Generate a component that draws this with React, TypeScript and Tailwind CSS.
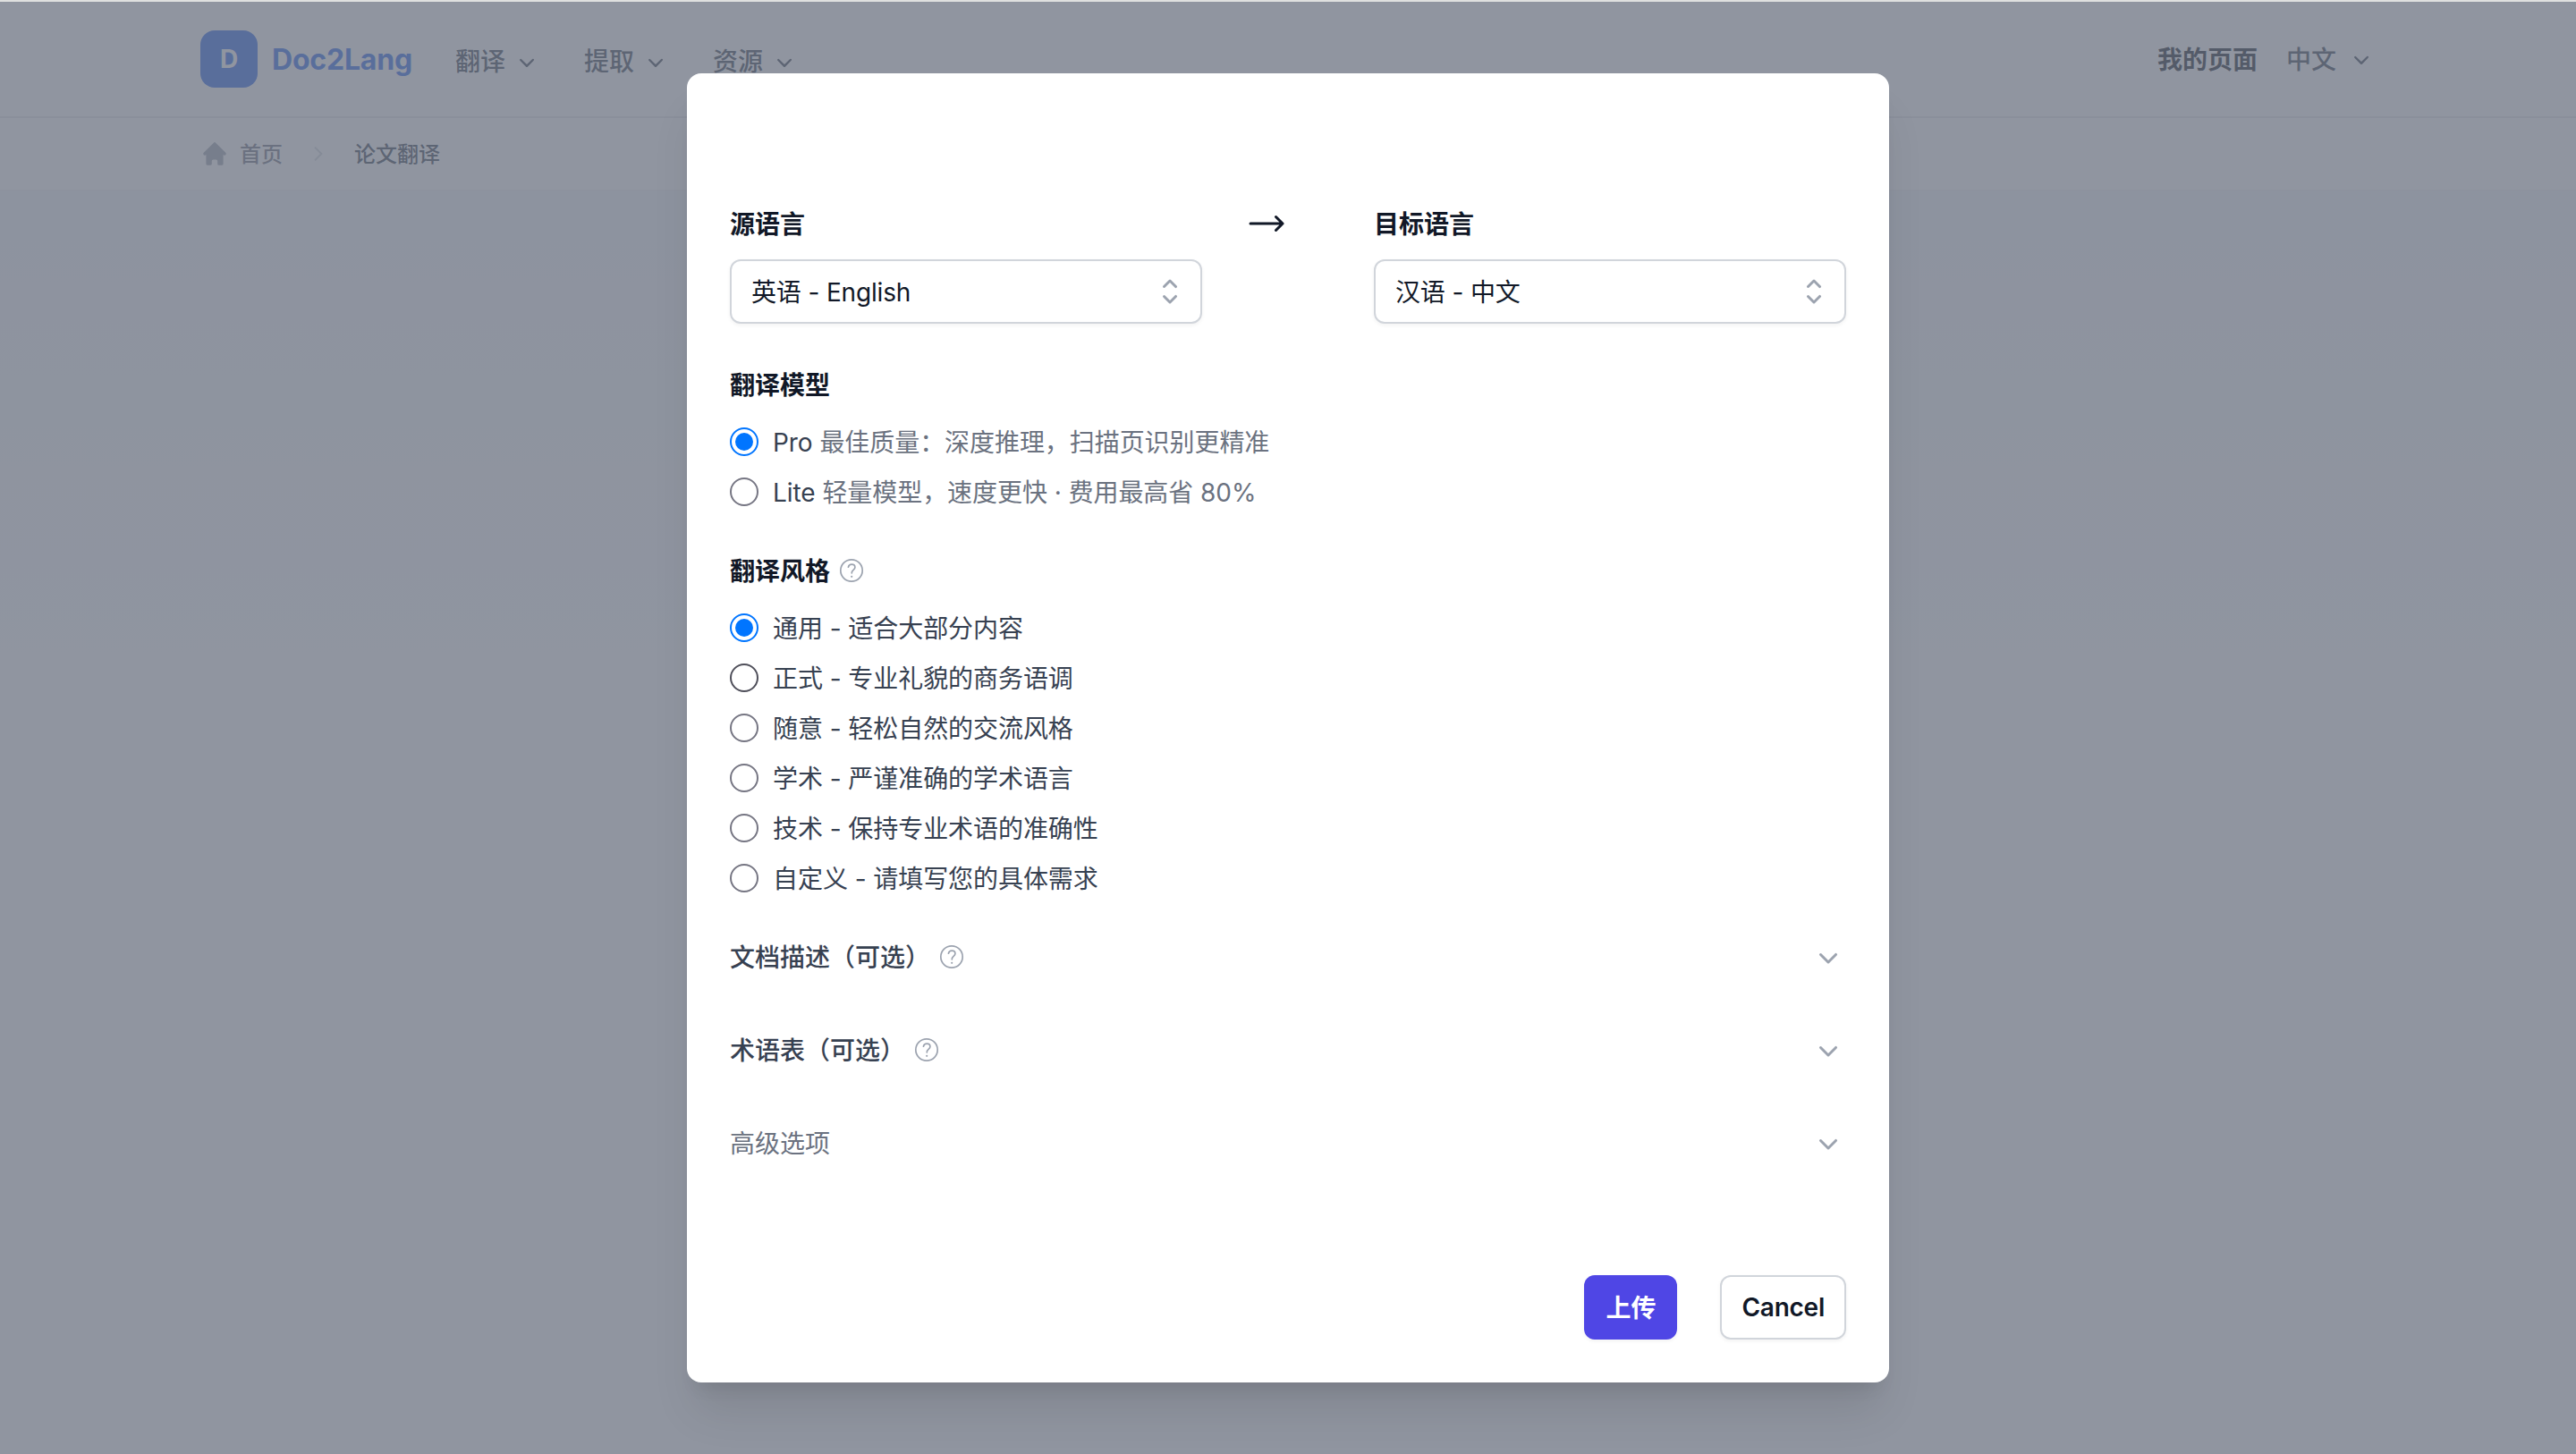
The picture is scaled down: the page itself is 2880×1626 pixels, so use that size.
import type { ReactNode } from "react";
import { HiHome } from "react-icons/hi";
import { HiMiniChevronDown, HiMiniChevronUpDown } from "react-icons/hi2";

const navItems = ["翻译", "提取", "资源"];

const styles = [
  "通用 - 适合大部分内容",
  "正式 - 专业礼貌的商务语调",
  "随意 - 轻松自然的交流风格",
  "学术 - 严谨准确的学术语言",
  "技术 - 保持专业术语的准确性",
  "自定义 - 请填写您的具体需求",
];

function HelpIcon() {
  return (
    <svg className="w-8 h-8 text-[#9ca3af]" viewBox="0 0 32 32" fill="none" stroke="currentColor" strokeWidth="1.7">
      <circle cx="16" cy="16" r="12.2" />
      <path d="M12.4 12.2c.5-2 1.9-3 3.8-3 2.1 0 3.7 1.3 3.7 3.2 0 2.8-3.6 3-3.6 5.8v.6" strokeLinecap="round" />
      <circle cx="16.2" cy="22.8" r="1.1" fill="currentColor" stroke="none" />
    </svg>
  );
}

function LanguageSelect({ label, value }: { label: string; value: string }) {
  return (
    <div className="w-[528px]">
      <div className="h-12 pt-px leading-[48px] font-semibold text-[#111827]">{label}</div>
      <button className="mt-4 flex w-full h-[72px] items-center justify-between rounded-xl border-2 border-[#d1d5db] bg-white pl-[22px] pr-3.5 tracking-[-0.15px] text-[#111827] shadow-[0_2px_4px_rgba(0,0,0,0.05)]">
        <span className="pt-px">{value}</span>
        <HiMiniChevronUpDown className="w-10 h-10 text-[#9ca3af]" />
      </button>
    </div>
  );
}

function Radio({ checked = false, dark = false, children }: { checked?: boolean; dark?: boolean; children: ReactNode }) {
  return (
    <label className="flex h-14 items-center gap-4 text-[#374151]">
      {checked ? (
        <span className="flex w-8 h-8 shrink-0 items-center justify-center rounded-full border-2 border-[#0075ff]">
          <span className="w-5 h-5 rounded-full bg-[#0075ff]" />
        </span>
      ) : (
        <span className={`w-8 h-8 shrink-0 rounded-full border-2 ${dark ? "border-[#4f4f5a]" : "border-[#767683]"}`} />
      )}
      <span className="pt-px whitespace-nowrap tracking-[-0.06px]">{children}</span>
    </label>
  );
}

function Section({ title, help = false, muted = false }: { title: string; help?: boolean; muted?: boolean }) {
  return (
    <div className="flex h-[104px] items-center justify-between">
      <div className="flex items-center">
        <span className={muted ? "pt-px text-[#6b7280]" : "pt-px font-medium text-[#374151]"}>{title}</span>
        {help && (
          <span className="ml-2">
            <HelpIcon />
          </span>
        )}
      </div>
      <HiMiniChevronDown className="w-10 h-10 text-[#9ca3af]" />
    </div>
  );
}

export default function App() {
  return (
    <div className="relative w-full h-[1626px] overflow-hidden bg-white font-['Inter','Noto_Sans_CJK_SC',sans-serif] text-[28px] leading-[48px]">
      {/* Header */}
      <header className="flex h-[132px] items-center justify-between border-b-2 border-[#e5e7eb] px-56 pt-0.5">
        <div className="flex items-center">
          <div className="flex w-16 h-16 items-center justify-center rounded-2xl bg-[#2563eb] font-bold text-white">D</div>
          <span className="mt-0.5 ml-4 text-[32px] font-bold tracking-[-0.2px] text-[#2563eb]">Doc2Lang</span>
          <nav className="ml-12 flex">
            {navItems.map((item) => (
              <div key={item} className="flex w-36 items-center gap-2 pt-[5px] font-medium text-[#374151]">
                {item}
                <HiMiniChevronDown className="w-8 h-8" />
              </div>
            ))}
          </nav>
        </div>
        <div className="flex items-center">
          <span className="pt-px font-semibold text-[#111827]">我的页面</span>
          <span className="ml-8 pt-px font-medium text-[#374151]">中文</span>
          <HiMiniChevronDown className="ml-3 w-8 h-8 text-[#374151]" />
        </div>
      </header>

      {/* Breadcrumb */}
      <div className="flex h-[82px] items-center border-b-2 border-[#f3f4f6] px-56 text-2xl">
        <HiHome className="w-8 h-8 text-[#9ca3af]" />
        <span className="ml-3 pt-0.5 font-medium text-[#6b7280]">首页</span>
        <svg className="ml-6 w-8 h-8 text-[#d1d5db]" viewBox="0 0 24 24" fill="none" stroke="currentColor" strokeWidth="1.5">
          <path d="M9 6.5l5.5 5.5L9 17.5" />
        </svg>
        <span className="ml-6 pt-0.5 font-medium text-[#374151]">论文翻译</span>
      </div>
      <div className="h-[620px] bg-linear-to-b from-[#f3f6f9] to-white" />

      {/* Modal */}
      <div className="absolute inset-0 bg-[#6b7280]/75">
        <div className="h-0.5 bg-[#dfe0df]" />
        <div className="mx-auto mt-20 flex h-[1464px] w-[1344px] flex-col rounded-2xl bg-white px-12 pt-36 pb-12 shadow-[0_40px_50px_-10px_rgba(0,0,0,0.1),0_16px_20px_-12px_rgba(0,0,0,0.1)]">
          <div className="flex">
            <LanguageSelect label="源语言" value="英语 - English" />
            <svg className="mr-24 ml-12 w-12 h-12 text-[#111827]" viewBox="0 0 24 24" fill="none" stroke="currentColor" strokeWidth="1.5" strokeLinecap="round" strokeLinejoin="round">
              <path d="M17.25 8.25L21 12m0 0l-3.75 3.75M21 12H3" />
            </svg>
            <LanguageSelect label="目标语言" value="汉语 - 中文" />
          </div>

          <div className="mt-[45px] font-semibold text-[#111827]">翻译模型</div>
          <div className="mt-[11px]">
            <Radio checked>
              Pro <span className="text-[#6b7280]">最佳质量：深度推理，扫描页识别更精准</span>
            </Radio>
            <Radio>
              Lite <span className="text-[#6b7280]">轻量模型，速度更快 · 费用最高省 80%</span>
            </Radio>
          </div>

          <div className="mt-9 flex items-center gap-2 font-semibold text-[#111827]">
            <span className="h-12 pt-px">翻译风格</span>
            <HelpIcon />
          </div>
          <div className="mt-3">
            {styles.map((style, i) => (
              <Radio key={style} checked={i === 0} dark={i === 1}>
                {style}
              </Radio>
            ))}
          </div>

          <div className="mt-2">
            <Section title="文档描述（可选）" help />
            <Section title="术语表（可选）" help />
            <Section title="高级选项" muted />
          </div>

          <div className="mt-auto flex justify-end gap-12">
            <button className="h-[72px] rounded-xl bg-[#4f46e5] px-6 pt-px font-semibold text-white shadow-[0_2px_4px_rgba(0,0,0,0.05)]">上传</button>
            <button className="h-[72px] rounded-xl border-2 border-[#d1d5db] bg-white px-[22px] font-semibold tracking-[-0.25px] text-[#111827] shadow-[0_2px_4px_rgba(0,0,0,0.05)]">
              Cancel
            </button>
          </div>
        </div>
      </div>
    </div>
  );
}
